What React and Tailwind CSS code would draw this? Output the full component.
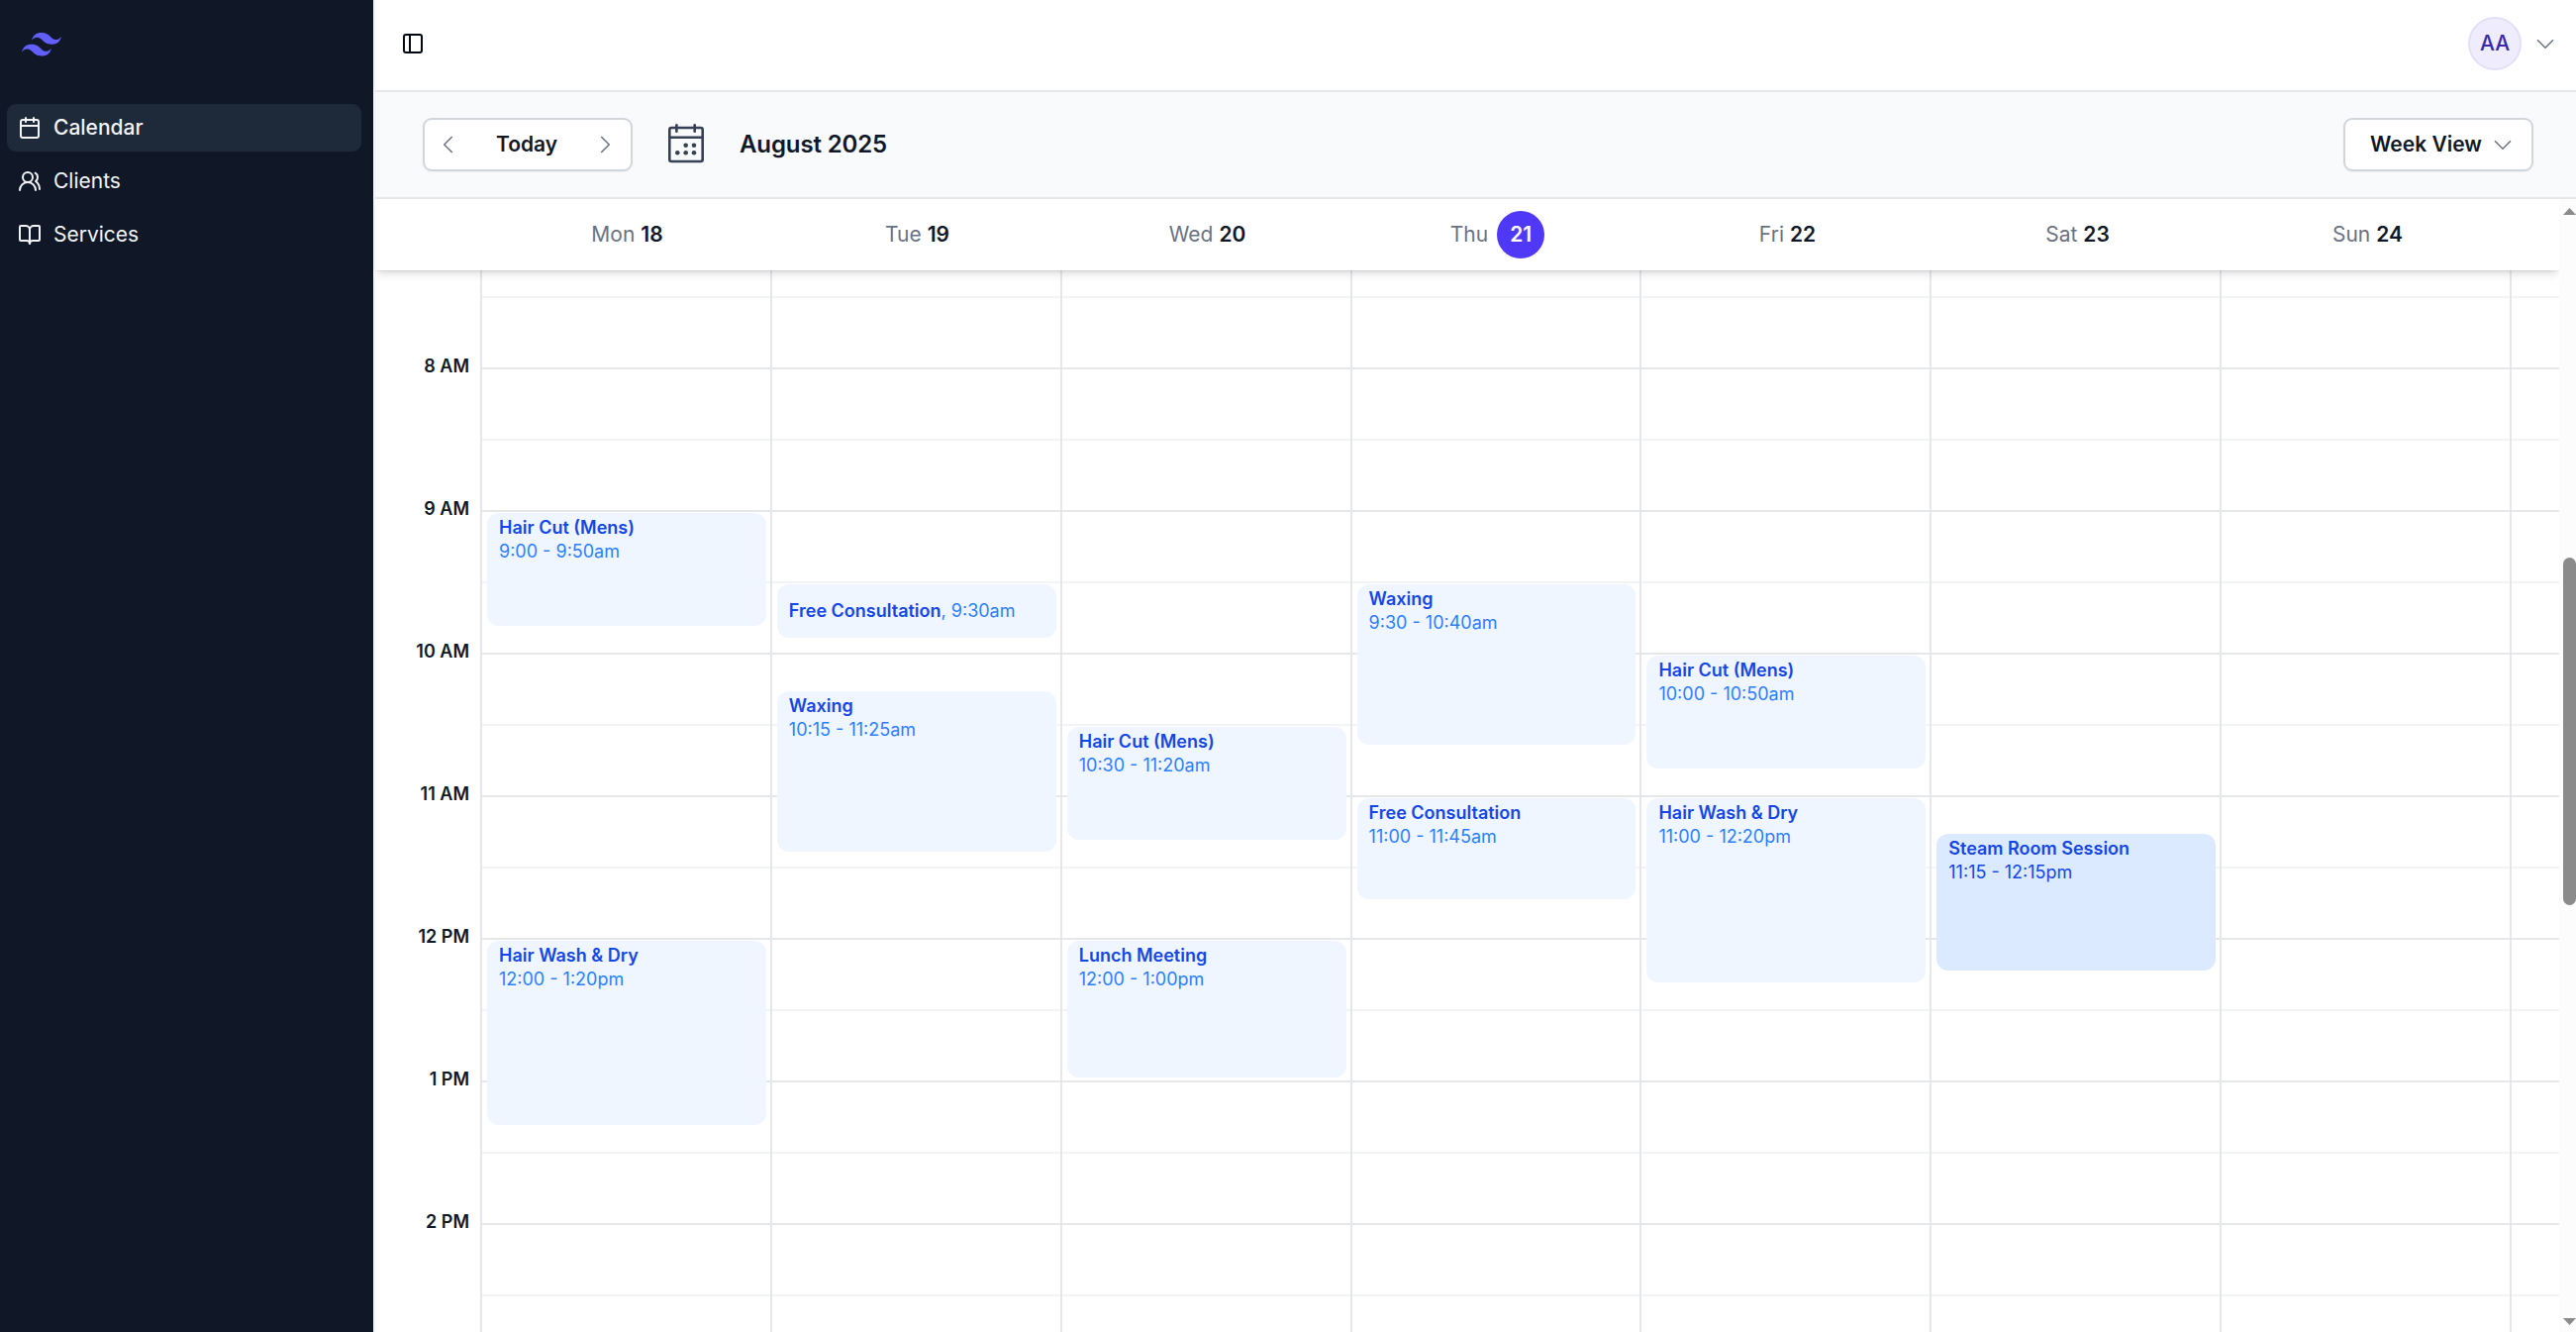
import { BookOpen, Calendar, PanelLeft, UsersRound } from 'lucide-react'

const NAV = [
  { label: 'Calendar', icon: Calendar, active: true },
  { label: 'Clients', icon: UsersRound },
  { label: 'Services', icon: BookOpen },
]

const DAYS = [
  { name: 'Mon', date: 18 },
  { name: 'Tue', date: 19 },
  { name: 'Wed', date: 20 },
  { name: 'Thu', date: 21, today: true },
  { name: 'Fri', date: 22 },
  { name: 'Sat', date: 23 },
  { name: 'Sun', date: 24 },
]

// start and length are minutes, start counted from midnight
const EVENTS = {
  18: [
    { title: 'Hair Cut (Mens)', time: '9:00 - 9:50am', start: 540, length: 50 },
    { title: 'Hair Wash & Dry', time: '12:00 - 1:20pm', start: 720, length: 80 },
  ],
  19: [
    { title: 'Free Consultation', time: '9:30am', start: 570, length: 25 },
    { title: 'Waxing', time: '10:15 - 11:25am', start: 615, length: 70 },
  ],
  20: [
    { title: 'Hair Cut (Mens)', time: '10:30 - 11:20am', start: 630, length: 50 },
    { title: 'Lunch Meeting', time: '12:00 - 1:00pm', start: 720, length: 60 },
  ],
  21: [
    { title: 'Waxing', time: '9:30 - 10:40am', start: 570, length: 70 },
    { title: 'Free Consultation', time: '11:00 - 11:45am', start: 660, length: 45 },
  ],
  22: [
    { title: 'Hair Cut (Mens)', time: '10:00 - 10:50am', start: 600, length: 50 },
    { title: 'Hair Wash & Dry', time: '11:00 - 12:20pm', start: 660, length: 80 },
  ],
  23: [
    { title: 'Steam Room Session', time: '11:15 - 12:15pm', start: 675, length: 60, hovered: true },
  ],
  24: [],
}

const HOURS = ['8 AM', '9 AM', '10 AM', '11 AM', '12 PM', '1 PM', '2 PM']

const PX_PER_MINUTE = 2.4
// minute of the day at the top edge of the scrolled grid
const GRID_START = 438.75

// -- Icons ---------------------------------------------------------------

const CHEVRON_LEFT = 'M15.75 20l-8-8 8-8'
const CHEVRON_RIGHT = 'M8.25 20l8-8-8-8'
const CHEVRON_DOWN = 'M20 8.25l-8 8-8-8'

function Chevron({ d }) {
  return (
    <svg viewBox="0 0 24 24" fill="none" stroke="currentColor" strokeWidth="1.5" className="size-6 text-gray-500">
      <path d={d} />
    </svg>
  )
}

function Logo() {
  return (
    <svg viewBox="0 0 54 33" className="h-6 w-10 fill-indigo-500" preserveAspectRatio="none">
      <path
        fillRule="evenodd"
        clipRule="evenodd"
        d="M27 0c-7.2 0-11.7 3.6-13.5 10.8 2.7-3.6 5.85-4.95 9.45-4.05 2.054.513 3.522 2.004 5.147 3.653C30.744 13.09 33.808 16.2 40.5 16.2c7.2 0 11.7-3.6 13.5-10.8-2.7 3.6-5.85 4.95-9.45 4.05-2.054-.513-3.522-2.004-5.147-3.653C36.756 3.11 33.692 0 27 0zM13.5 16.2C6.3 16.2 1.8 19.8 0 27c2.7-3.6 5.85-4.95 9.45-4.05 2.054.514 3.522 2.004 5.147 3.653C17.244 29.29 20.308 32.4 27 32.4c7.2 0 11.7-3.6 13.5-10.8-2.7 3.6-5.85 4.95-9.45 4.05-2.054-.513-3.522-2.004-5.147-3.653C23.256 19.31 20.192 16.2 13.5 16.2z"
      />
    </svg>
  )
}

function MonthIcon() {
  return (
    <svg viewBox="0 0 38 42" fill="none" className="h-[42px] w-[38px] text-gray-700">
      <g stroke="currentColor" strokeWidth="2.6" strokeLinecap="round">
        <rect x="2.3" y="5" width="33.4" height="34" rx="2" />
        <path d="M2.3 14.7h33.4M9.4 2.3v6.4M27.7 2.3v6.4" />
      </g>
      <g fill="currentColor">
        <circle cx="18.7" cy="22.7" r="2.3" />
        <circle cx="27" cy="22.7" r="2.3" />
        <circle cx="10.3" cy="30.3" r="2.3" />
        <circle cx="18.7" cy="30.3" r="2.3" />
        <circle cx="27" cy="30.3" r="2.3" />
      </g>
    </svg>
  )
}

// -- Layout --------------------------------------------------------------

function Sidebar() {
  return (
    <aside className="w-[377px] shrink-0 bg-gray-900 pl-[7px] pr-3 pt-[33px]">
      <div className="pl-[15px]">
        <Logo />
      </div>
      <nav className="mt-12 flex flex-col gap-1.5">
        {NAV.map(({ label, icon: Icon, active }) => (
          <a
            key={label}
            className={`flex h-12 items-center gap-3 rounded-[9px] pl-[11px] text-[21px] text-gray-100 ${active ? 'bg-gray-800 font-medium' : ''}`}
          >
            <Icon className="size-6" strokeWidth={2} />
            {label}
          </a>
        ))}
      </nav>
    </aside>
  )
}

function TopBar() {
  return (
    <header className="flex h-[93px] shrink-0 items-center justify-between border-b-2 border-gray-200 pl-[26px] pr-[19px]">
      <PanelLeft className="mb-[3px] size-6 text-gray-950" strokeWidth={2} />
      <div className="mb-[3px] flex items-center gap-3">
        <span className="flex size-[54px] items-center justify-center rounded-full border-2 border-[#e3dff6] bg-[#eeecfd] text-[21px] font-medium text-indigo-800">
          AA
        </span>
        <Chevron d={CHEVRON_DOWN} />
      </div>
    </header>
  )
}

function Toolbar() {
  return (
    <div className="flex h-[108px] shrink-0 items-center border-b-2 border-gray-200 bg-gray-50 pl-12 pr-[43px]">
      <div className="flex h-[54px] w-[212px] items-center justify-between rounded-[9px] border-2 border-gray-300 bg-white pl-3 pr-3.5 text-[21px] font-semibold text-gray-900 shadow-xs">
        <Chevron d={CHEVRON_LEFT} />
        Today
        <Chevron d={CHEVRON_RIGHT} />
      </div>
      <div className="ml-[35px] mb-0.5">
        <MonthIcon />
      </div>
      <h1 className="ml-[35px] text-2xl font-semibold tracking-[-0.12px] text-gray-900">August 2025</h1>
      <button className="ml-auto flex h-[54px] w-[192px] items-center gap-[9px] rounded-[9px] border-2 border-gray-300 bg-white pl-[25px] text-[21px] font-semibold text-gray-900 shadow-xs">
        Week View
        <Chevron d={CHEVRON_DOWN} />
      </button>
    </div>
  )
}

function DayHeader() {
  return (
    <div className="relative z-10 flex h-[72px] shrink-0 bg-white pl-[108px] pr-[47px] text-[21px] text-gray-500 shadow-[0_0_0_1px_rgb(0_0_0/0.05),0_6px_9px_-1.5px_rgb(0_0_0/0.1),0_3px_6px_-3px_rgb(0_0_0/0.1)]">
      {DAYS.map(day => (
        <div key={day.date} className="flex flex-1 items-center justify-center">
          {day.name}
          {day.today ? (
            <span className="ml-[9px] flex size-12 items-center justify-center rounded-full bg-indigo-600 font-semibold text-white">
              {day.date}
            </span>
          ) : (
            <span className="ml-1.5 font-semibold text-gray-900">{day.date}</span>
          )}
        </div>
      ))}
    </div>
  )
}

function Event({ event }) {
  const short = event.length < 30
  return (
    <div
      className={`absolute left-[5px] right-1 flex flex-col overflow-hidden rounded-xl px-3 text-lg leading-6 ${
        event.hovered ? 'bg-blue-100 text-blue-700' : 'bg-blue-50 text-blue-500'
      } ${short ? 'justify-center' : 'pt-[3px]'}`}
      style={{
        top: (event.start - GRID_START) * PX_PER_MINUTE + 2,
        height: event.length * PX_PER_MINUTE - 6,
      }}
    >
      {short ? (
        <p>
          <span className="font-semibold text-blue-700">{event.title}</span>, {event.time}
        </p>
      ) : (
        <>
          <p className="font-semibold text-blue-700">{event.title}</p>
          <p>{event.time}</p>
        </>
      )}
    </div>
  )
}

function WeekGrid() {
  return (
    <div className="flex min-h-0 flex-1 overflow-hidden">
      <div className="w-[106px] shrink-0 pt-[25px] pr-[11px] text-lg font-semibold text-gray-900">
        {HOURS.map(hour => (
          <div key={hour} className="flex h-36 items-center justify-end">
            {hour}
          </div>
        ))}
      </div>
      <div className="relative min-w-0 flex-1">
        {/* hour and half-hour rules */}
        <div className="flex flex-col pt-[26px]">
          <div className="h-[72px] border-t-2 border-gray-100" />
          {HOURS.map(hour => (
            <div key={hour} className="h-36 border-t-2 border-gray-200">
              <div className="mt-[70px] border-t-2 border-gray-100" />
            </div>
          ))}
        </div>
        <div className="absolute inset-0 flex">
          {DAYS.map(day => (
            <div key={day.date} className="relative flex-1 border-l-2 border-gray-200">
              {EVENTS[day.date].map(event => (
                <Event key={event.title} event={event} />
              ))}
            </div>
          ))}
          <div className="w-[50px] border-l-2 border-gray-200" />
        </div>
      </div>
    </div>
  )
}

function Scrollbar() {
  return (
    <div className="flex w-[17px] shrink-0 flex-col items-end bg-[#fcfcfc] pt-[9px] pb-[7px]">
      <svg viewBox="0 0 13 7" className="h-[7px] w-[13px] fill-[#8b8b8b]">
        <path d="M0 7 6.5 0 13 7z" />
      </svg>
      <div className="mt-[346px] h-[351px] w-[13px] rounded-full bg-[#8b8b8b]" />
      <svg viewBox="0 0 13 7" className="mt-auto h-[7px] w-[13px] fill-[#8b8b8b]">
        <path d="M0 0h13L6.5 7z" />
      </svg>
    </div>
  )
}

export default function App() {
  return (
    <div className="flex h-[1345px] w-[2602px] overflow-hidden bg-white font-['Inter',sans-serif]">
      <Sidebar />
      <main className="flex min-w-0 flex-1 flex-col border-l-2 border-gray-100">
        <TopBar />
        <Toolbar />
        <div className="flex min-h-0 flex-1">
          <div className="flex min-w-0 flex-1 flex-col overflow-hidden">
            <DayHeader />
            <WeekGrid />
          </div>
          <Scrollbar />
        </div>
      </main>
    </div>
  )
}
